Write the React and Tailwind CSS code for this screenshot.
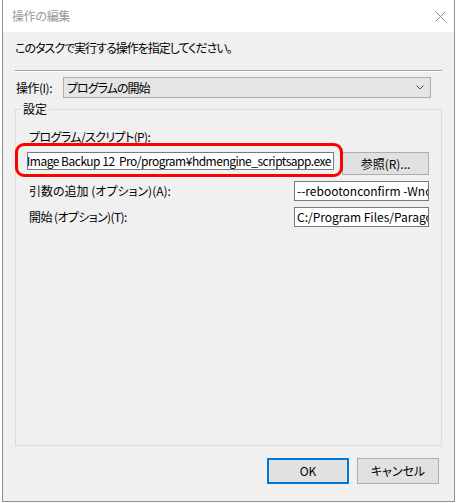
import React from "react";

const font = { fontFamily: '"Noto Sans CJK JP", "Noto Sans", sans-serif' };

export default function App() {
  return (
    <div className="w-[457px] h-[503px] bg-white text-[12px] text-black [font-feature-settings:'palt']" style={font}>
      <div className="ml-[2px] w-[453px] h-[502px] border-x border-b border-[#8f8f8f] bg-[#f0f0f0] flex flex-col">
        {/* title bar */}
        <div className="h-[32px] bg-white flex items-center justify-between pl-[9px] pr-[8px] shrink-0">
          <span className="text-[12px] leading-[16px] text-[#9a9a9a] tracking-[-0.3px]">操作の編集</span>
          <svg width="11" height="11" viewBox="0 0 11 11" className="mt-[1px]">
            <path d="M0.5 0.5 L10.5 10.5 M10.5 0.5 L0.5 10.5" stroke="#8a8a8a" strokeWidth="1" fill="none" />
          </svg>
        </div>

        <div className="px-[12px] flex flex-col">
          <div className="mt-[8px] h-[16px] leading-[16px] whitespace-nowrap tracking-[-1px]">このタスクで実行する操作を指定してください。</div>
          <div className="mt-[14px] border-t border-b border-t-[#a0a0a0] border-b-white" />

          <div className="mt-[5px] flex items-center h-[21px]">
            <div className="w-[48px] pl-[1px] leading-[16px] whitespace-nowrap tracking-[-0.5px]">操作(I):</div>
            <div className="flex-1 mr-[11px] h-[21px] border border-[#adadad] bg-[#e5e5e5] flex items-center justify-between pl-[3px] pr-[6px]">
              <span className="leading-[16px] tracking-[-1px]">プログラムの開始</span>
              <svg width="8" height="5" viewBox="0 0 8 5">
                <path d="M0.5 0.5 L4 4 L7.5 0.5" stroke="#505050" strokeWidth="1" fill="none" />
              </svg>
            </div>
          </div>

          {/* group box */}
          <div className="mt-[11px] relative border border-[#dcdcdc] h-[337px] pl-[11px] pr-[12px] flex flex-col">
            <div className="absolute left-[4px] -top-[9px] px-[3px] bg-[#f0f0f0] leading-[16px]">設定</div>

            <div className="mt-[19px] pl-[2px] leading-[16px] h-[16px] whitespace-nowrap tracking-[-0.6px]">プログラム/スクリプト(P):</div>
            <div className="mt-[7px] flex items-start">
              <div className="w-[307px] h-[18px] border border-[#7a7a7a] bg-white overflow-hidden flex justify-end items-center pr-[2px] whitespace-nowrap leading-[16px] tracking-[-0.5px]">
                <span className="shrink-0">C:/Program Files/Paragon Software/Image Backup 12&nbsp; Pro/program¥hdmengine_scriptsapp.exe</span>
              </div>
              <div className="ml-[8px] w-[87px] h-[23px] border border-[#adadad] bg-[#e1e1e1] flex items-center justify-center leading-[16px]">
                参照(R)...
              </div>
            </div>

            <div className="mt-[6px] flex items-center justify-between">
              <div className="pl-[2px] leading-[16px] whitespace-nowrap">引数の追加 (オプション)(A):</div>
              <div className="w-[135px] h-[20px] border border-[#7a7a7a] bg-white overflow-hidden flex items-center pl-[2px] whitespace-nowrap leading-[16px]">
                <span className="shrink-0">--rebootonconfirm -Wnoconfirm</span>
              </div>
            </div>

            <div className="mt-[6px] flex items-center justify-between">
              <div className="pl-[2px] leading-[16px] whitespace-nowrap tracking-[-0.6px]">開始 (オプション)(T):</div>
              <div className="w-[135px] h-[20px] border border-[#7a7a7a] bg-white overflow-hidden flex items-center pl-[2px] whitespace-nowrap leading-[16px]">
                <span className="shrink-0">C:/Program Files/Paragon Software</span>
              </div>
            </div>

            {/* red annotation */}
            <div className="absolute left-[-1px] top-[33px] w-[328px] h-[34px] border-[3px] border-[#ff0000] rounded-[9px] pointer-events-none" />
          </div>

          <div className="mt-[12px] flex justify-end gap-[8px] mr-[3px]">
            <div className="w-[82px] h-[26px] border-2 border-[#0078d7] bg-[#e1e1e1] flex items-center justify-center leading-[16px]">OK</div>
            <div className="w-[82px] h-[26px] border border-[#adadad] bg-[#e1e1e1] flex items-center justify-center leading-[16px]">キャンセル</div>
          </div>
        </div>
      </div>
    </div>
  );
}
